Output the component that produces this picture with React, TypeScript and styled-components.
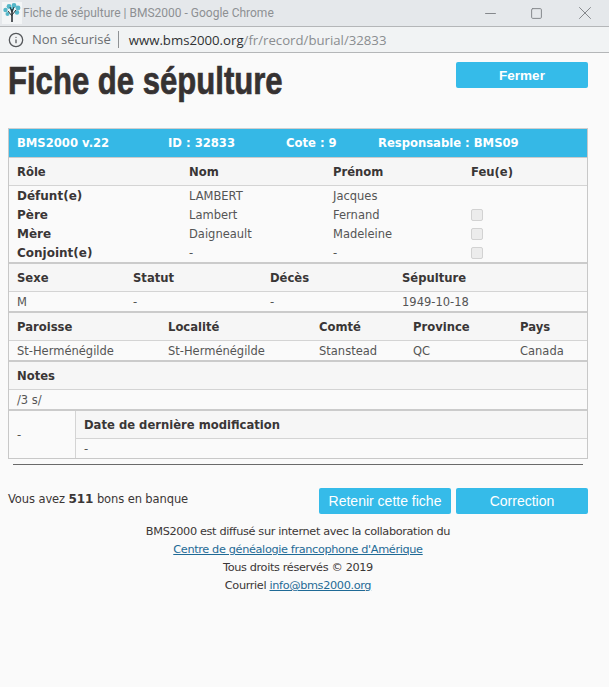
import React from "react";
import styled, { createGlobalStyle } from "styled-components";
import { Info, Minus, Square, X } from "lucide-react";

const Global = createGlobalStyle`
  html, body { margin: 0; padding: 0; background: #fafafa; }
  body { font-family: "DejaVu Sans", Verdana, sans-serif; font-size: 11.5px; color: #3a3636; }
  * { box-sizing: border-box; }
`;

const Window = styled.div`
  width: 609px;
  height: 687px;
  overflow: hidden;
  display: flex;
  flex-direction: column;
`;
const TitleBar = styled.div`
  height: 27px;
  flex: none;
  background: #e5e8eb;
  border-bottom: 1px solid #b4b6b8;
  display: flex;
  align-items: center;
  padding-left: 2px;
`;
const TitleText = styled.span`
  margin-left: 1px;
  flex: 1;
  font: 12px Roboto, "Noto Sans", sans-serif;
  color: #8d9093;
`;
const WinButtons = styled.div`
  display: flex;
  align-items: center;
  gap: 31px;
  padding-right: 13px;
  color: #85888c;
`;
const AddressBar = styled.div`
  height: 26px;
  flex: none;
  background: #f1f3f4;
  border-bottom: 1px solid #b4b6b8;
  display: flex;
  align-items: center;
  padding-left: 8px;
  font: 14px "Open Sans", "Noto Sans", sans-serif;
  color: #7c7f82;
`;
const Secure = styled.span`
  margin-left: 8px;
  padding-right: 7px;
  border-right: 1px solid #8f9295;
  line-height: 17px;
  color: #6b6e71;
  font-size: 13px;
`;
const Url = styled.span`
  margin-left: 10px;
  color: #8a8d90;
  font-size: 13.2px;
  b { font-weight: 400; color: #2f3133; }
`;
const Page = styled.main`
  flex: 1;
  padding: 0 21px 0 8px;
  display: flex;
  flex-direction: column;
`;
const Header = styled.header`
  display: flex;
  justify-content: space-between;
  align-items: flex-start;
  height: 75px;
`;
const Title = styled.h1`
  margin: 5px 0 0 0;
  font: bold 39px/46px "Liberation Sans", Arial, sans-serif;
  color: #363232;
  -webkit-text-stroke: 0.7px #363232;
  white-space: nowrap;
  transform: scaleX(0.797);
  transform-origin: left center;
`;
const Button = styled.button<{ $bold?: boolean }>`
  width: 132px;
  height: 26px;
  border: 0;
  border-radius: 2px;
  background: #35bbe9;
  color: #fff;
  padding: 0;
  font: ${(p) => (p.$bold ? "bold 13.5px" : "14px")} "Liberation Sans", Arial, sans-serif;
`;
const CloseButton = styled(Button)`
  margin-top: 9px;
`;
const Card = styled.section`
  width: 580px;
  border: 1px solid #c8c8c8;
  border-top-color: #cfcfcf;
`;
const Band = styled.div`
  height: 28px;
  background: #35b8e6;
  color: #fff;
  font-weight: bold;
  font-size: 11.6px;
  display: grid;
  grid-template-columns: 151px 118px 92px 1fr;
  align-items: center;
  padding-left: 8px;
  border-bottom: 2px solid #cbcbcb;
  box-sizing: content-box;
  margin-bottom: -1px;
`;
const Row = styled.div<{ $cols: string }>`
  display: grid;
  grid-template-columns: ${(p) => p.$cols};
  padding-left: 8px;
  align-items: center;
`;
const HeadRow = styled(Row)`
  height: 28px;
  background: #f6f6f6;
  border-bottom: 1px solid #d4d4d4;
  font-weight: bold;
  font-size: 11.6px;
  color: #3a3636;
`;
const ValueRow = styled(Row)`
  height: 19px;
  font-size: 11.5px;
  color: #555;
`;
const LastValueRow = styled(ValueRow)`
  height: 21px;
  border-bottom: 2px solid #cbcbcb;
`;
const RoleCell = styled.span`
  font-weight: bold;
  font-size: 12px;
  color: #3a3636;
`;
const Check = styled.span`
  width: 12px;
  height: 12px;
  border: 1px solid #d2d2d2;
  border-radius: 2px;
  background: #ececec;
  display: block;
  margin-top: 1px;
`;
const Split = styled.div`
  display: grid;
  grid-template-columns: 67px 1fr;
`;
const SplitLeft = styled.div`
  display: flex;
  align-items: center;
  padding-left: 8px;
  border-right: 1px solid #d4d4d4;
  color: #555;
`;
const SplitHead = styled.div`
  height: 28px;
  background: #f6f6f6;
  border-bottom: 1px solid #d4d4d4;
  font-weight: bold;
  font-size: 11.6px;
  display: flex;
  align-items: center;
  padding-left: 8px;
`;
const SplitValue = styled.div`
  height: 19px;
  display: flex;
  align-items: center;
  padding-left: 8px;
  color: #555;
`;
const Rule = styled.hr`
  width: 570px;
  margin: 5px 0 0 5px;
  border: 0;
  border-top: 1px solid #6a6a6a;
  height: 1px;
`;
const Actions = styled.div`
  display: flex;
  align-items: center;
  margin-top: 23px;
  height: 26px;
  width: 580px;
`;
const Balance = styled.div`
  flex: 1;
  font-size: 11.5px;
  letter-spacing: -0.1px;
  padding-bottom: 4px;
  b { font-size: 12px; }
`;
const ActionButtons = styled.div`
  display: flex;
  gap: 5px;
`;
const Footer = styled.footer`
  width: 580px;
  margin-top: 9px;
  text-align: center;
  line-height: 18px;
  font-size: 11.3px;
  letter-spacing: -0.36px;
  a { color: #1f6a96; text-decoration: underline; }
`;
const LOGO = (
  <svg width="20" height="22" viewBox="0 0 20 22" fill="none" aria-hidden="true">
    <rect width="20" height="22" fill="#f3f5f6" />
    <g fill="#55b7c9">
      <circle cx="3.5" cy="8" r="2.2" /><circle cx="7" cy="4.5" r="2.4" /><circle cx="12" cy="3.5" r="2.4" />
      <circle cx="16" cy="6" r="2.4" /><circle cx="15" cy="10.5" r="2.2" /><circle cx="5.5" cy="12" r="2" />
      <circle cx="10" cy="7" r="2" />
    </g>
    <rect x="9.2" y="7" width="1.6" height="13" fill="#2e3538" />
    <path d="M10 14 6 9M10 13l4-5M10 10 8 5M10 10l2-5" stroke="#2e3538" strokeWidth="1" />
  </svg>
);

const ROLE = "172px 144px 138px 1fr";
const PERS = "116px 137px 132px 1fr";
const LIEU = "151px 151px 94px 107px 1fr";

export default function App() {
  return (
    <Window>
      <Global />
      <TitleBar>
        {LOGO}
        <TitleText>Fiche de sépulture | BMS2000 - Google Chrome</TitleText>
        <WinButtons>
          <Minus size={17} strokeWidth={1} absoluteStrokeWidth />
          <Square size={13} strokeWidth={1} absoluteStrokeWidth />
          <X size={22} strokeWidth={1} absoluteStrokeWidth />
        </WinButtons>
      </TitleBar>
      <AddressBar>
        <Info size={16} strokeWidth={1.3} absoluteStrokeWidth color="#55585b" />
        <Secure>Non sécurisé</Secure>
        <Url><b>www.bms2000.org</b>/fr/record/burial/32833</Url>
      </AddressBar>
      <Page>
        <Header>
          <Title>Fiche de sépulture</Title>
          <CloseButton $bold>Fermer</CloseButton>
        </Header>
        <Card>
          <Band>
            <span>BMS2000 v.22</span>
            <span>ID : 32833</span>
            <span>Cote : 9</span>
            <span>Responsable : BMS09</span>
          </Band>
          <HeadRow $cols={ROLE}><span>Rôle</span><span>Nom</span><span>Prénom</span><span>Feu(e)</span></HeadRow>
          <ValueRow $cols={ROLE}><RoleCell>Défunt(e)</RoleCell><span>LAMBERT</span><span>Jacques</span><span /></ValueRow>
          <ValueRow $cols={ROLE}><RoleCell>Père</RoleCell><span>Lambert</span><span>Fernand</span><Check /></ValueRow>
          <ValueRow $cols={ROLE}><RoleCell>Mère</RoleCell><span>Daigneault</span><span>Madeleine</span><Check /></ValueRow>
          <LastValueRow $cols={ROLE}><RoleCell>Conjoint(e)</RoleCell><span>-</span><span>-</span><Check /></LastValueRow>
          <HeadRow $cols={PERS}><span>Sexe</span><span>Statut</span><span>Décès</span><span>Sépulture</span></HeadRow>
          <LastValueRow $cols={PERS}><span>M</span><span>-</span><span>-</span><span>1949-10-18</span></LastValueRow>
          <HeadRow $cols={LIEU}><span>Paroisse</span><span>Localité</span><span>Comté</span><span>Province</span><span>Pays</span></HeadRow>
          <LastValueRow $cols={LIEU}><span>St-Herménégilde</span><span>St-Herménégilde</span><span>Stanstead</span><span>QC</span><span>Canada</span></LastValueRow>
          <HeadRow $cols="1fr"><span>Notes</span></HeadRow>
          <LastValueRow $cols="1fr"><span>/3 s/</span></LastValueRow>
          <Split>
            <SplitLeft>-</SplitLeft>
            <div>
              <SplitHead>Date de dernière modification</SplitHead>
              <SplitValue>-</SplitValue>
            </div>
          </Split>
        </Card>
        <Rule />
        <Actions>
          <Balance>Vous avez <b>511</b> bons en banque</Balance>
          <ActionButtons>
            <Button>Retenir cette fiche</Button>
            <Button>Correction</Button>
          </ActionButtons>
        </Actions>
        <Footer>
          BMS2000 est diffusé sur internet avec la collaboration du<br />
          <a href="#centre">Centre de généalogie francophone d'Amérique</a><br />
          Tous droits réservés © 2019<br />
          Courriel <a href="#mail">info@bms2000.org</a>
        </Footer>
      </Page>
    </Window>
  );
}
